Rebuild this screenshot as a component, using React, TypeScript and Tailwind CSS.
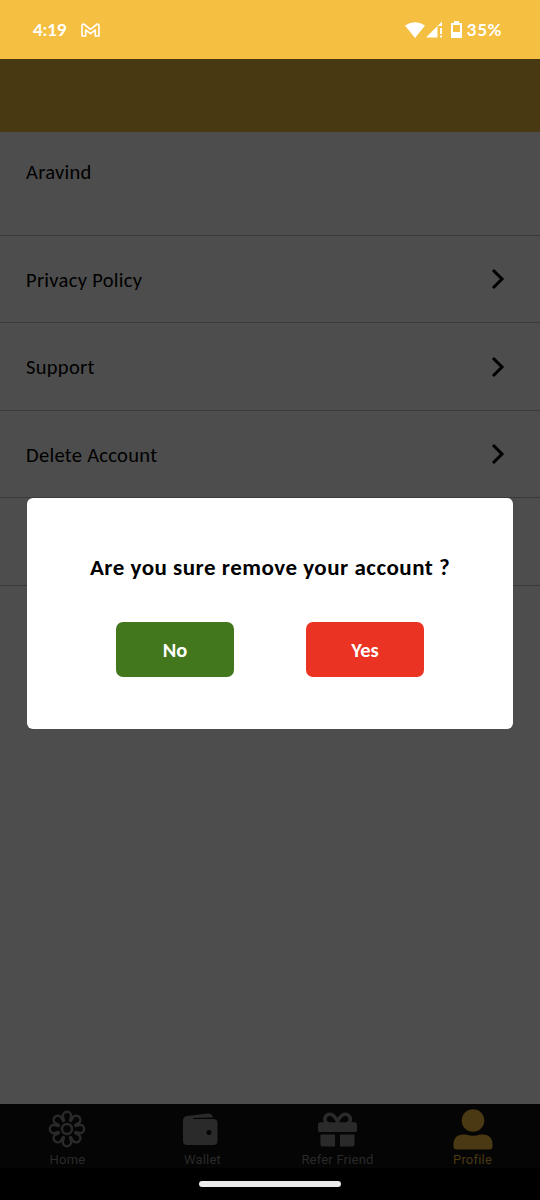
import { FaGift } from "react-icons/fa";

const MENU = ["Privacy Policy", "Support", "Delete Account"];

const PETALS = [0, 45, 90, 135, 180, 225, 270, 315];

function StatusBar() {
  return (
    <header className="flex h-[59px] items-center bg-[#f5bf42] pl-[33px] pr-[38px] font-['Lato',sans-serif] text-[17px] font-bold text-white">
      <span className="w-[48px]">4:19</span>
      <svg width="19" height="14" viewBox="0 0 19 14" fill="none" stroke="currentColor" strokeWidth="1.6" strokeLinejoin="round">
        <path d="M1 13V2.500Q1 1 2.700 1L9.500 6.300 16.300 1Q18 1 18 2.500V13H14.300V7L9.500 10.700 4.700 7V13Z" />
      </svg>
      <div className="ml-auto flex items-center">
        <svg width="20" height="16" viewBox="0 0 20 16" fill="currentColor">
          <path d="M0 3.500Q10-3 20 3.500L10 16Z" />
        </svg>
        <svg className="ml-px" width="17" height="17" viewBox="0 0 17 17" fill="currentColor">
          <path d="M0 16.500 16 .5V5H11.500V16.500ZM14 7H16V13H14ZM14 14.500H16V16.500H14Z" />
        </svg>
        <svg className="-mt-px ml-[8px] mr-[5px]" width="11" height="17" viewBox="0 0 11 17">
          <path fill="currentColor" fillRule="evenodd" d="M3 0H8V2H11V17H0V2H3ZM2 4V11H9V4Z" />
        </svg>
        <span className="tracking-[0.5px]">35%</span>
      </div>
    </header>
  );
}

function Chevron() {
  return (
    <svg width="14" height="22" viewBox="0 0 14 22" fill="none" stroke="#000" strokeWidth="3">
      <path d="M2 2 11 11 2 20" />
    </svg>
  );
}

function FlowerIcon() {
  return (
    <svg className="-translate-x-px" width="38" height="38" viewBox="-19 -19 38 38" fill="none" stroke="currentColor" strokeWidth="2.4" strokeLinecap="round">
      <circle r="5" />
      {PETALS.map((angle) => (
        <path key={angle} transform={`rotate(${angle})`} d="M-3-8.500-4.200-13A4.200 4.200 0 0 1 4.200-13L3-8.500" />
      ))}
    </svg>
  );
}

function WalletIcon() {
  return (
    <svg className="-translate-x-[3px]" width="36" height="33" viewBox="0 0 36 33" fill="currentColor">
      <path d="M2 4.500Q2.500 3.300 5 3L26 .6Q30 .2 31 4.500L11 5V6H32Q35.500 6.500 35.500 10V28Q35.500 32 31.500 32H5Q1 32 1 28V8Q1 5.500 2 4.500ZM27 17a2.500 2.500 0 1 0 0 5 2.500 2.500 0 0 0 0-5Z" />
    </svg>
  );
}

function ProfileIcon() {
  return (
    <svg width="40" height="41" viewBox="0 0 40 41" fill="currentColor">
      <circle cx="20" cy="11.500" r="11.300" />
      <path d="M10 25.500H13Q20 28 27 25.500H30C36 25.500 39.500 29.500 39.500 35V37.500Q39.500 40.500 36.500 40.500H3.500Q.5 40.500 .5 37.500V35C.5 29.500 4 25.500 10 25.500Z" />
    </svg>
  );
}

const TABS = [
  { label: "Home", icon: <FlowerIcon /> },
  { label: "Wallet", icon: <WalletIcon /> },
  { label: "Refer Friend", icon: <FaGift size={39} /> },
  { label: "Profile", icon: <ProfileIcon />, active: true },
];

function ConfirmDialog() {
  return (
    <div role="dialog" className="absolute left-[27px] top-[498px] h-[231px] w-[486px] rounded-[6px] bg-white pt-[54px] text-center">
      <p className="text-[23px] font-bold leading-[30px] tracking-[0.5px] text-black">
        Are you sure remove your account ?
      </p>
      <div className="mt-[40px] flex justify-center gap-[72px] text-[20.5px] font-bold text-white">
        <button className="h-[55px] w-[118px] rounded-[7px] bg-[#42771e] pt-[2px]">No</button>
        <button className="h-[55px] w-[118px] rounded-[7px] bg-[#eb3323] pt-[2px]">Yes</button>
      </div>
    </div>
  );
}

export default function App() {
  return (
    <div className="relative flex h-[1200px] w-[540px] flex-col overflow-hidden bg-[#4d4d4d] font-['Carlito','Calibri','Lato',sans-serif] text-[20.5px] text-black">
      <StatusBar />
      <div className="h-[73px] bg-[#493913]" />
      <main className="flex-1">
        <div className="h-[104px] border-b border-[#3a3a3a] pl-[26px] pt-[26px] leading-[28px] tracking-[0.3px]">Aravind</div>
        {MENU.map((item) => (
          <div key={item} className="flex h-[87.400px] items-center justify-between border-b border-[#3a3a3a] pl-[26px] pr-[35px] tracking-[0.3px]">
            <span className="pt-[2px]">{item}</span>
            <Chevron />
          </div>
        ))}
        <div className="h-[87.400px] border-b border-[#3a3a3a]" />
      </main>
      <nav className="grid h-[64px] grid-cols-4 bg-[#050505] font-['Roboto',sans-serif] text-[13px] tracking-[0.2px]">
        {TABS.map((tab) => (
          <div key={tab.label} className={`flex flex-col items-center ${tab.active ? "text-[#4a3913]" : "text-[#2a2a2a]"}`}>
            <div className="flex h-[50px] items-center">{tab.icon}</div>
            <span className="-mt-px leading-[13px]">{tab.label}</span>
          </div>
        ))}
      </nav>
      <div className="flex h-[32px] justify-center bg-black pt-[13px]">
        <div className="h-[6px] w-[142px] rounded-full bg-[#ececec]" />
      </div>
      <ConfirmDialog />
    </div>
  );
}
